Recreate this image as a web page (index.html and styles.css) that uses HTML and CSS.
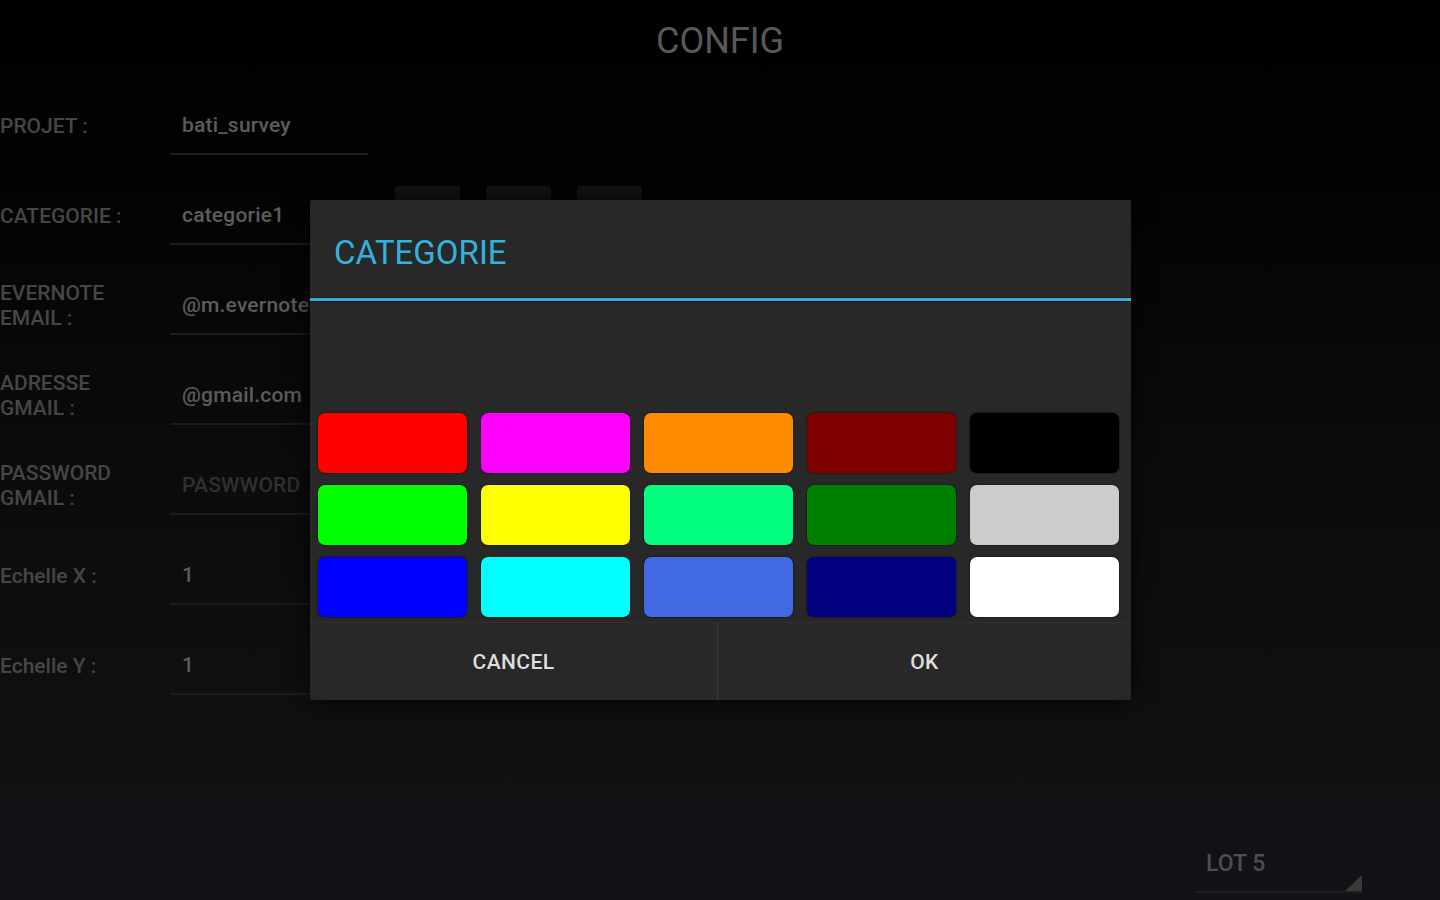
FILE: index.html
```html
<!DOCTYPE html>
<html lang="fr">
<head>
    <meta charset="UTF-8">
    <meta name="viewport" content="width=device-width, initial-scale=1.0">
    <title>Config</title>
    <link rel="stylesheet" href="styles.css">
</head>
<body>

<div class="screen">
    <h1 class="title">CONFIG</h1>

    <div class="form">
        <div class="row">
            <div class="label">PROJET :</div>
            <div class="field">bati_survey</div>
        </div>
        <div class="row">
            <div class="label">CATEGORIE :</div>
            <div class="field">categorie1</div>
            <div class="mini-buttons">
                <span class="mini"></span>
                <span class="mini"></span>
                <span class="mini"></span>
            </div>
        </div>
        <div class="row">
            <div class="label">EVERNOTE<br>EMAIL :</div>
            <div class="field">@m.evernote.com</div>
        </div>
        <div class="row">
            <div class="label">ADRESSE<br>GMAIL :</div>
            <div class="field">@gmail.com</div>
        </div>
        <div class="row">
            <div class="label">PASSWORD<br>GMAIL :</div>
            <div class="field hint">PASWWORD</div>
        </div>
        <div class="row">
            <div class="label">Echelle X :</div>
            <div class="field">1</div>
        </div>
        <div class="row">
            <div class="label">Echelle Y :</div>
            <div class="field">1</div>
        </div>
    </div>

    <div class="footer">
        <div class="spinner">
            <span>LOT 5</span>
            <span class="spinner-arrow"></span>
        </div>
    </div>
</div>

<div class="dialog">
    <div class="dialog-header">CATEGORIE</div>
    <div class="dialog-body">
        <div class="palette">
            <div class="swatch" style="background-color: #ff0000"></div>
            <div class="swatch" style="background-color: #ff00ff"></div>
            <div class="swatch" style="background-color: #ff8c00"></div>
            <div class="swatch" style="background-color: #800000"></div>
            <div class="swatch" style="background-color: #000000"></div>
            <div class="swatch" style="background-color: #00ff00"></div>
            <div class="swatch" style="background-color: #ffff00"></div>
            <div class="swatch" style="background-color: #00ff7f"></div>
            <div class="swatch" style="background-color: #008000"></div>
            <div class="swatch" style="background-color: #cccccc"></div>
            <div class="swatch" style="background-color: #0000ff"></div>
            <div class="swatch" style="background-color: #00ffff"></div>
            <div class="swatch" style="background-color: #4169e1"></div>
            <div class="swatch" style="background-color: #000080"></div>
            <div class="swatch" style="background-color: #ffffff"></div>
        </div>
    </div>
    <div class="dialog-buttons">
        <button type="button">CANCEL</button>
        <button type="button">OK</button>
    </div>
</div>

</body>
</html>
```

FILE: styles.css
```css
body {
    margin: 0;
    width: 1440px;
    height: 900px;
    overflow: hidden;
    font-family: Roboto, "Liberation Sans", sans-serif;
    background: linear-gradient(#000000 0%, #030303 20%, #0b0b0c 50%, #121316 100%);
}

.screen {
    height: 900px;
    display: flex;
    flex-direction: column;
}

.title {
    margin: 0;
    height: 81px;
    display: flex;
    align-items: center;
    justify-content: center;
    font-size: 36px;
    font-weight: normal;
    color: #585858;
}

.row {
    height: 90px;
    display: flex;
    align-items: center;
}

.label {
    width: 170px;
    font-size: 21px;
    font-weight: 500;
    line-height: 25px;
    color: #464646;
}

.field {
    width: 186px;
    height: 56px;
    padding-left: 12px;
    display: flex;
    align-items: center;
    border-bottom: 2px solid #1c1c1c;
    font-size: 21px;
    font-weight: 500;
    color: #5c5c5c;
    letter-spacing: 0.2px;
    white-space: nowrap;
    overflow: hidden;
}

.field.hint {
    color: #303030;
}

.mini-buttons {
    display: flex;
    gap: 26px;
    margin-left: 27px;
    align-self: flex-start;
    margin-top: 15px;
}

.mini {
    width: 65px;
    height: 60px;
    background-color: #141414;
    border-radius: 3px;
}

.footer {
    margin-top: auto;
    display: flex;
    justify-content: flex-end;
    padding: 0 78px 7px 0;
}

.spinner {
    position: relative;
    width: 156px;
    height: 56px;
    padding-left: 11px;
    display: flex;
    align-items: center;
    border-bottom: 2px solid #1e1e1e;
    font-size: 23px;
    font-weight: 500;
    color: #4e4e4e;
}

.spinner-arrow {
    position: absolute;
    right: 0;
    bottom: 0;
    width: 0;
    height: 0;
    border-left: 17px solid transparent;
    border-bottom: 16px solid #3a3a3a;
}

/* dialogue par-dessus l'ecran */
.dialog {
    position: absolute;
    left: 310px;
    top: 200px;
    width: 821px;
    height: 500px;
    background-color: #282828;
    border-radius: 2px;
    box-shadow: 0 0 24px rgba(0, 0, 0, 0.8);
    display: flex;
    flex-direction: column;
}

.dialog-header {
    height: 92px;
    padding: 6px 0 0 24px;
    display: flex;
    align-items: center;
    font-size: 33px;
    color: #35b1de;
    border-bottom: 3px solid #34b0dd;
    box-shadow: 0 1px 0 #1a1414, 0 -1px 0 #1e1818 inset;
}

.dialog-body {
    flex: 1;
    display: flex;
    align-items: flex-end;
    padding: 0 12px 5px 8px;
}

.palette {
    width: 100%;
    display: grid;
    grid-template-columns: repeat(5, 149px);
    grid-auto-rows: 60px;
    column-gap: 14px;
    row-gap: 12px;
}

.swatch {
    border-radius: 7px;
    box-shadow: 0 0 2px rgba(0, 0, 0, 0.9);
}

.dialog-buttons {
    height: 77px;
    display: flex;
    border-top: 1px solid #303030;
}

.dialog-buttons button {
    flex: 1;
    background: none;
    border: none;
    font-family: Roboto, "Liberation Sans", sans-serif;
    font-size: 21px;
    font-weight: 500;
    letter-spacing: 0.4px;
    color: #dedede;
    cursor: pointer;
}

.dialog-buttons button:first-child {
    flex: 0 0 408px;
    border-right: 1px solid #3a3a3a;
}
```
